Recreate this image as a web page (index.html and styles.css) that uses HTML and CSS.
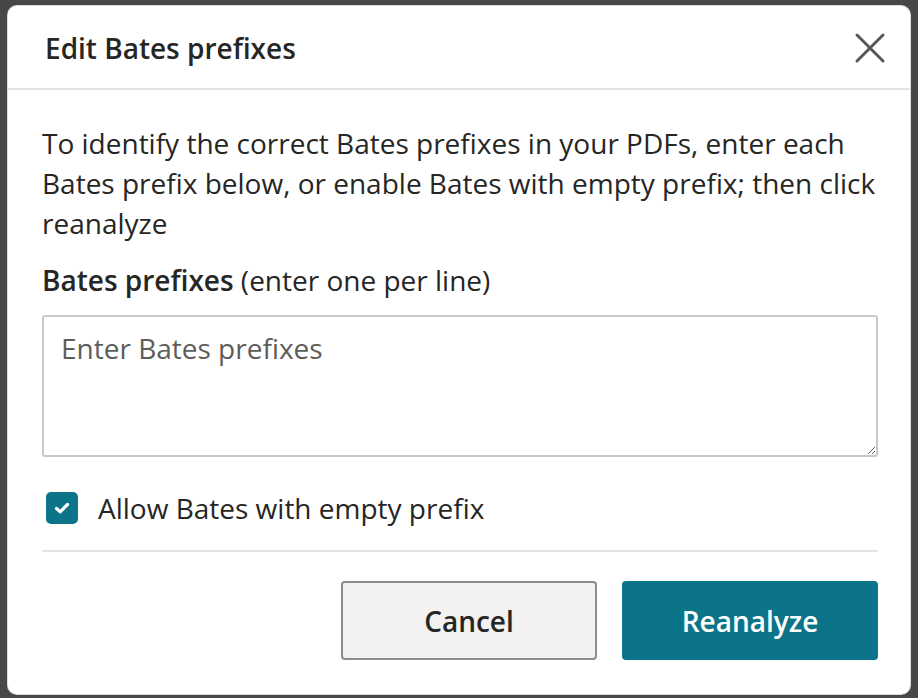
FILE: index.html
```html
<!DOCTYPE html>
<html lang="en">
<head>
  <meta charset="UTF-8">
  <title>Edit Bates prefixes</title>
  <link rel="stylesheet" href="styles.css">
</head>
<body>
  <div class="modal">
    <div class="modal-header">
      <h2>Edit Bates prefixes</h2>
      <button class="close-btn" aria-label="Close">
        <svg width="32" height="32" viewBox="0 0 32 32">
          <path d="M3 3 L29 29 M29 3 L3 29" stroke="#575753" stroke-width="3" stroke-linecap="round" fill="none"/>
        </svg>
      </button>
    </div>
    <div class="modal-body">
      <p class="intro">To identify the correct Bates prefixes in your PDFs, enter each Bates prefix below, or enable Bates with empty prefix; then click reanalyze</p>
      <label class="field-label" for="prefixes"><b>Bates prefixes</b> (enter one per line)</label>
      <textarea id="prefixes" placeholder="Enter Bates prefixes"></textarea>
      <label class="check-row">
        <span class="checkbox">
          <svg class="check-icon" viewBox="0 0 20 20">
            <path d="M4.5 10.5 L8.2 13.8 L15.5 6.5" stroke="#fff" stroke-width="3.2" stroke-linecap="round" stroke-linejoin="round" fill="none"/>
          </svg>
        </span>
        Allow Bates with empty prefix
      </label>
      <div class="modal-footer">
        <button class="btn btn-cancel">Cancel</button>
        <button class="btn btn-primary">Reanalyze</button>
      </div>
    </div>
  </div>
</body>
</html>
```

FILE: styles.css
```css
body {
  margin: 0;
  padding: 6px 8px 4px 8px;
  background: #474745;
  font-family: 'Open Sans', 'Noto Sans', Arial, sans-serif;
  color: #262624;
}
.modal {
  background: #fff;
  border-radius: 9px;
  height: 688px;
  box-sizing: border-box;
  box-shadow: 0 0 0 1px #dcdcd8;
  display: flex;
  flex-direction: column;
}
.modal-header {
  height: 82px;
  border-bottom: 2px solid #e3e3df;
  display: flex;
  align-items: center;
  justify-content: space-between;
  padding: 0 24px 0 37px;
}
.modal-header h2 {
  margin: 0;
  font-size: 28px;
  font-weight: 600;
  color: #262624;
  padding-top: 2px;
}
.close-btn {
  background: none;
  border: none;
  padding: 0;
  width: 32px;
  height: 32px;
  cursor: pointer;
  margin-top: 2px;
}
.modal-body {
  padding: 33px 32px 34px 34px;
  display: flex;
  flex-direction: column;
  flex: 1;
}
.intro {
  margin: 0;
  font-size: 28px;
  line-height: 40px;
}
.field-label {
  margin-top: 17px;
  font-size: 28px;
  line-height: 40px;
}
.field-label b {
  font-weight: 600;
}
textarea {
  margin-top: 15px;
  height: 142px;
  box-sizing: border-box;
  border: 2px solid #c9c9c5;
  border-radius: 3px;
  padding: 12px 17px;
  font-family: inherit;
  font-size: 28px;
  color: #262624;
  resize: vertical;
}
textarea::placeholder {
  color: #5d5d59;
}
.check-row {
  margin-top: 35px;
  display: flex;
  align-items: center;
  font-size: 28px;
  line-height: 32px;
  height: 32px;
}
.checkbox {
  flex: none;
  width: 32px;
  height: 32px;
  margin-left: 4px;
  margin-right: 20px;
  border-radius: 5px;
  background: #0b7488;
  display: flex;
  align-items: center;
  justify-content: center;
}
.check-icon {
  display: block;
  width: 20px;
  height: 20px;
}
.modal-footer {
  margin-top: 26px;
  border-top: 2px solid #e3e3df;
  padding-top: 29px;
  display: flex;
  justify-content: flex-end;
  gap: 25px;
}
.btn {
  width: 256px;
  height: 79px;
  border-radius: 4px;
  font-family: inherit;
  font-size: 28px;
  font-weight: 600;
  cursor: pointer;
}
.btn-cancel {
  background: #f3f2f0;
  border: 2px solid #8c8c89;
  color: #262624;
}
.btn-primary {
  background: #0b7488;
  border: none;
  color: #fff;
}
```
